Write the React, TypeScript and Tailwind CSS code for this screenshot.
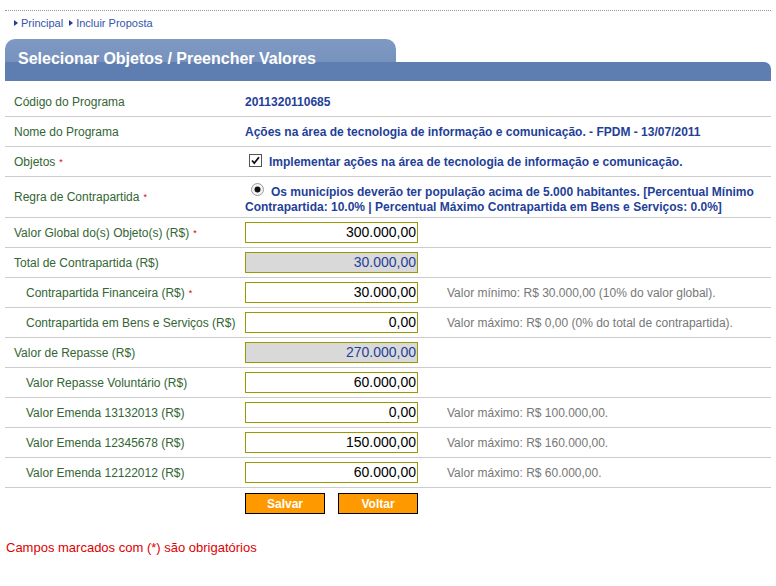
import React from "react"

type Row = {
  label: string
  required?: boolean
  indent?: boolean
  value: string
  disabled?: boolean
  hint?: string
}

const rows: Row[] = [
  { label: "Valor Global do(s) Objeto(s) (R$)", required: true, value: "300.000,00" },
  { label: "Total de Contrapartida (R$)", value: "30.000,00", disabled: true },
  { label: "Contrapartida Financeira (R$)", required: true, indent: true, value: "30.000,00", hint: "Valor mínimo: R$ 30.000,00 (10% do valor global)." },
  { label: "Contrapartida em Bens e Serviços (R$)", indent: true, value: "0,00", hint: "Valor máximo: R$ 0,00 (0% do total de contrapartida)." },
  { label: "Valor de Repasse (R$)", value: "270.000,00", disabled: true },
  { label: "Valor Repasse Voluntário (R$)", indent: true, value: "60.000,00" },
  { label: "Valor Emenda 13132013 (R$)", indent: true, value: "0,00", hint: "Valor máximo: R$ 100.000,00." },
  { label: "Valor Emenda 12345678 (R$)", indent: true, value: "150.000,00", hint: "Valor máximo: R$ 160.000,00." },
  { label: "Valor Emenda 12122012 (R$)", indent: true, value: "60.000,00", hint: "Valor máximo: R$ 60.000,00." },
]

function Req() {
  return <span className="ml-[4px] text-[9px] text-[#e00000] relative top-[-1px]">*</span>
}

function Label({ text, required, indent }: { text: string; required?: boolean; indent?: boolean }) {
  return (
    <div className={`w-[240px] shrink-0 text-[12px] text-[#336633] ${indent ? "pl-[21px]" : "pl-[9px]"}`}>
      {text}
      {required && <Req />}
    </div>
  )
}

function Crumb({ text }: { text: string }) {
  return (
    <span className="flex items-center gap-[3px]">
      <svg width="4" height="6" viewBox="0 0 4 6">
        <path d="M0 0 L4 3 L0 6 Z" fill="#1f3f8f" />
      </svg>
      <span>{text}</span>
    </span>
  )
}

export default function App() {
  return (
    <div className="w-[776px] h-[586px] bg-white font-['Liberation_Sans',Arial,sans-serif]">
      <div className="pt-[10px] pl-[5px] pr-[5px]">
        <div className="border-t border-dotted border-[#999999]" />

        {/* breadcrumbs */}
        <div className="mt-[4px] h-[16px] flex items-center gap-[6px] pl-[9px] text-[11px] text-[#3355aa]">
          <Crumb text="Principal" />
          <Crumb text="Incluir Proposta" />
        </div>

        {/* header */}
        <div className="mt-[8px] w-[766px]">
          <div className="w-[391px] h-[23px] rounded-t-[10px] bg-gradient-to-b from-[#7e99c2] to-[#7792bd] pl-[13px] pt-[10px]">
            <span className="block text-[16px] leading-[20px] font-bold text-white relative z-10">
              Selecionar Objetos / Preencher Valores
            </span>
          </div>
          <div className="h-[19px] bg-[#5e7db1] rounded-tr-[7px]" />
        </div>

        {/* form */}
        <div className="mt-[6px] w-[766px]">
          <div className="h-[30px] flex items-center border-b border-[#cccccc]">
            <Label text="Código do Programa" />
            <div className="text-[12px] font-bold text-[#1f3f99]">2011320110685</div>
          </div>
          <div className="h-[30px] flex items-center border-b border-[#cccccc]">
            <Label text="Nome do Programa" />
            <div className="text-[12px] font-bold text-[#1f3f99]">
              Ações na área de tecnologia de informação e comunicação. - FPDM - 13/07/2011
            </div>
          </div>
          <div className="h-[30px] flex items-center border-b border-[#cccccc]">
            <Label text="Objetos" required />
            <div className="flex items-center text-[12px] font-bold text-[#1f3f99]">
              <svg width="13" height="13" viewBox="0 0 13 13" className="ml-[4px] mr-[7px] -mt-[3px]">
                <rect x="0.5" y="0.5" width="12" height="12" fill="#fff" stroke="#555" />
                <path d="M3 6.5 L5.3 9.2 L10 3.2" fill="none" stroke="#111" strokeWidth="1.8" />
              </svg>
              Implementar ações na área de tecnologia de informação e comunicação.
            </div>
          </div>
          <div className="h-[41px] flex items-center border-b border-[#cccccc]">
            <Label text="Regra de Contrapartida" required />
            <div className="text-[12px] leading-[15px] font-bold text-[#1f3f99] pt-[5px]">
              <span className="inline-flex align-middle ml-[6px] mr-[7px] -mt-[6px]">
                <svg width="13" height="13" viewBox="0 0 13 13">
                  <circle cx="6.5" cy="6.5" r="6" fill="#f4f4f4" stroke="#9a9a9a" />
                  <circle cx="6.5" cy="6.5" r="3" fill="#111" />
                </svg>
              </span>
              Os municípios deverão ter população acima de 5.000 habitantes. [Percentual Mínimo
              <br />
              Contrapartida: 10.0% | Percentual Máximo Contrapartida em Bens e Serviços: 0.0%]
            </div>
          </div>

          {rows.map((r) => (
            <div key={r.label} className="h-[30px] flex items-center border-b border-[#cccccc]">
              <Label text={r.label} required={r.required} indent={r.indent} />
              <div
                className={`w-[173px] h-[21px] border border-[#999900] flex items-center justify-end pr-[1px] text-[14px] ${
                  r.disabled ? "bg-[#d9d9d9] text-[#1f3f99]" : "bg-white text-black"
                }`}
              >
                {r.value}
              </div>
              {r.hint && <div className="ml-[29px] text-[12px] text-[#777777]">{r.hint}</div>}
            </div>
          ))}

          {/* buttons */}
          <div className="flex gap-[13px] pl-[240px] mt-[5px]">
            <button className="w-[80px] h-[21px] bg-[#ff9900] border border-black text-white text-[12px] font-bold">
              Salvar
            </button>
            <button className="w-[80px] h-[21px] bg-[#ff9900] border border-black text-white text-[12px] font-bold">
              Voltar
            </button>
          </div>
        </div>

        <div className="mt-[24px] pl-[1px] text-[13px] text-[#dd0000]">Campos marcados com (*) são obrigatórios</div>
      </div>
    </div>
  )
}
